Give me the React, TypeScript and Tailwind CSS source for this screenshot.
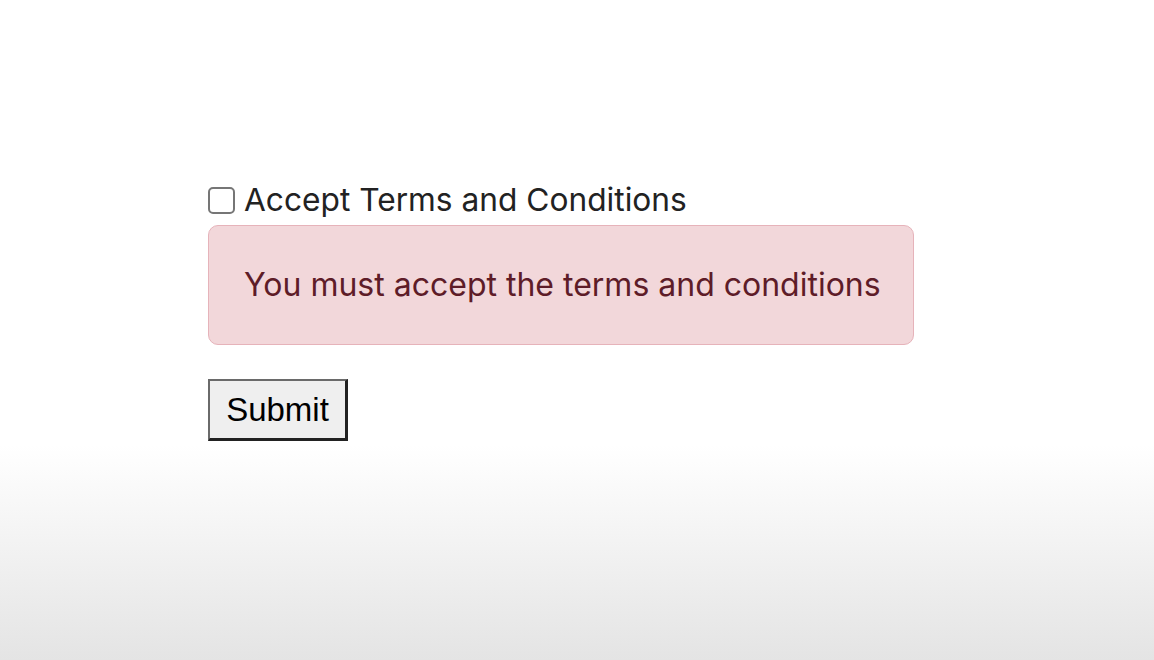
import { useState } from "react";

export default function App() {
  const [accepted, setAccepted] = useState(false);

  return (
    <div className="h-[660px] w-full bg-[linear-gradient(to_bottom,#ffffff_0px,#ffffff_445px,#e4e4e4_660px)] font-['Inter','Liberation_Sans',sans-serif]">
      <form className="flex flex-col items-start pl-[208px] pt-[181px]" onSubmit={(e) => e.preventDefault()}>
        <label className="flex h-[38px] items-center gap-[9px] text-[31.7px] leading-none text-[#222]">
          <input
            type="checkbox"
            checked={accepted}
            onChange={(e) => setAccepted(e.target.checked)}
            className="h-[27px] w-[27px] appearance-none rounded-[5px] border-2 border-[#767676] bg-white"
          />
          <span>Accept Terms and Conditions</span>
        </label>
        <div className="mt-[6px] flex h-[120px] w-[706px] items-center rounded-[10px] border border-[#e6b3ba] bg-[#f2d7da] px-[35px]">
          <p className="whitespace-nowrap text-[32px] leading-none text-[#5e1c28]">
            You must accept the terms and conditions
          </p>
        </div>
        <button
          type="submit"
          className="mt-[34px] h-[62px] w-[140px] border-2 border-r-[3px] border-b-[3px] border-t-[#6a6a6a] border-l-[#6a6a6a] border-r-[#222] border-b-[#222] bg-[#efefef] font-['Liberation_Sans',Arial,sans-serif] text-[33px] leading-none text-black"
        >
          Submit
        </button>
      </form>
    </div>
  );
}
